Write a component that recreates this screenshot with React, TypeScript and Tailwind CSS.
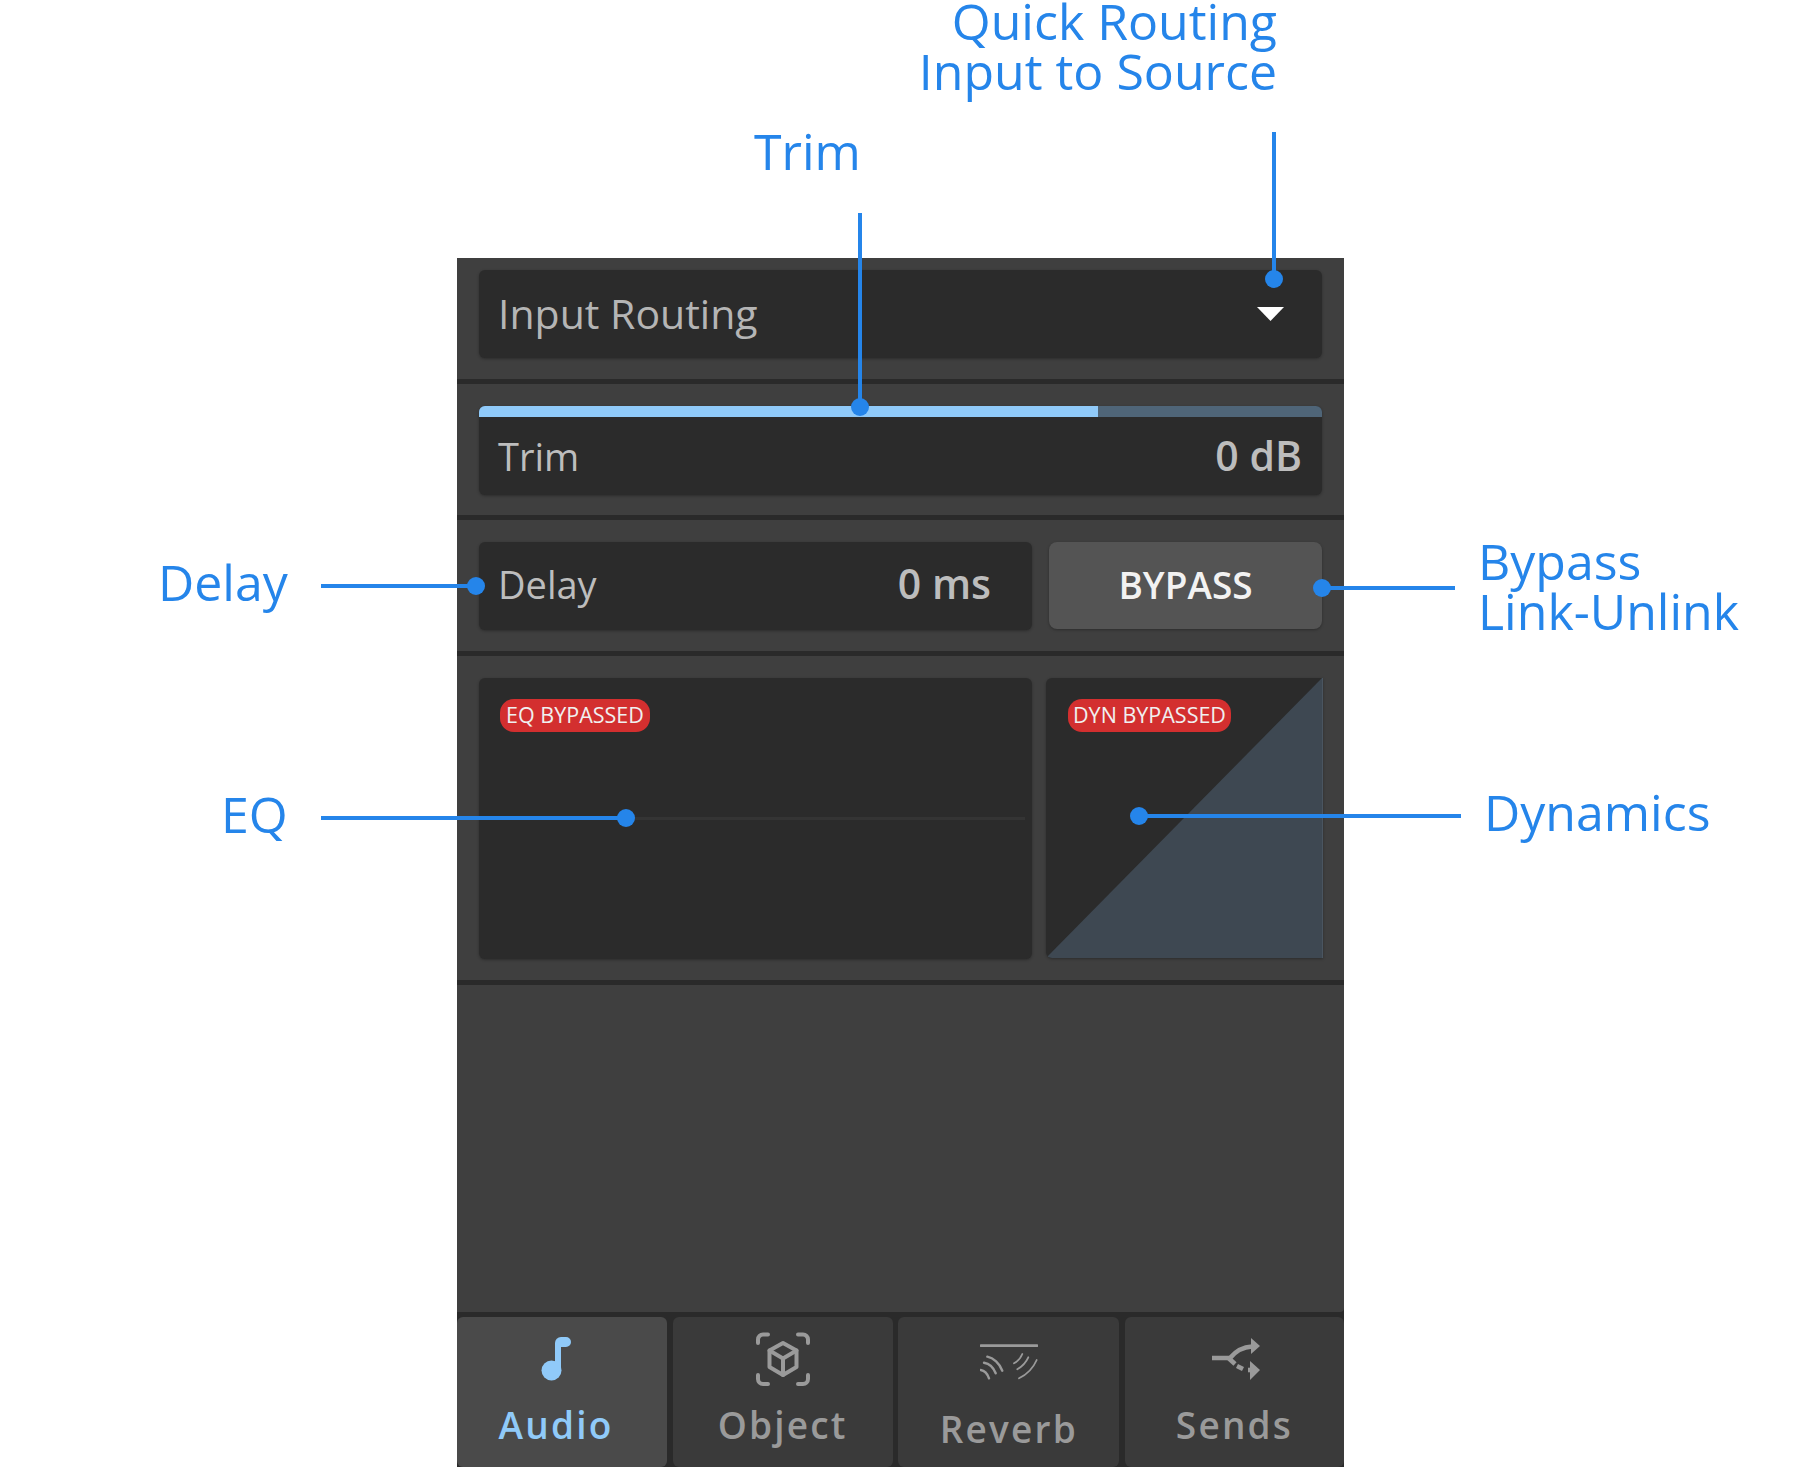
const font = { fontFamily: '"Open Sans", sans-serif' };

function Dot({ className }: { className: string }) {
  return <div className={`absolute h-[18px] w-[18px] rounded-full bg-[#2585ea] ${className}`} />;
}

function Label({ className, children }: { className: string; children: React.ReactNode }) {
  return <div className={`absolute whitespace-nowrap text-[50px] leading-[50px] text-[#2585ea] ${className}`}>{children}</div>;
}

function Line({ className }: { className: string }) {
  return <div className={`absolute bg-[#2585ea] ${className}`} />;
}

function Divider() {
  return <div className="h-[5px] bg-[#2a2a2a]" />;
}

function MusicIcon() {
  return (
    <svg width="30" height="44" viewBox="0 0 30 44" fill="#90caf9">
      <circle cx="10.5" cy="33.5" r="10" />
      <path d="M14 36V6a6 6 0 0 1 6-6h5a5 5 0 0 1 0 10h-5v26z" />
    </svg>
  );
}

function ObjectIcon() {
  return (
    <svg width="54" height="54" viewBox="0 0 54 54" fill="none" stroke="#9a9a9a" strokeWidth="4" strokeLinecap="round" strokeLinejoin="round">
      <path d="M12 2.5H7A5 5 0 0 0 2 7.5V11" />
      <path d="M42 2.5H47A5 5 0 0 1 52 7.5V11" />
      <path d="M2 43V47A5 5 0 0 0 7 52H12" />
      <path d="M52 43V47A5 5 0 0 1 47 52H42" />
      <path d="M27 11L40.5 18.5V35L27 43L13.5 35V18.5Z" />
      <path d="M13.5 18.5L27 26.5L40.5 18.5M27 26.5V43" />
    </svg>
  );
}

function ReverbIcon() {
  return (
    <svg width="58" height="36" viewBox="0 0 58 36" fill="none" stroke="#9a9a9a" strokeLinecap="round">
      <path d="M1 1.7H57" strokeWidth="2.8" />
      <g strokeWidth="2.4">
        <path d="M7.3 12.7C13.5 14 19.5 19.5 22.3 26.7" />
        <path d="M4 18.7C9 19.5 13.5 23.5 15.7 29.3" />
        <path d="M0.7 26C4 26.5 7.5 30 9 34.3" />
      </g>
      <g strokeWidth="1.8">
        <path d="M34 19.3C37.5 17.5 40.5 14.5 42.3 10" />
        <path d="M37.3 25.3C42 22.5 46 18.5 48.3 13.3" />
        <path d="M39 34.3C47 30.5 53 24.5 56.7 16" />
      </g>
    </svg>
  );
}

function SendsIcon() {
  return (
    <svg width="48" height="42" viewBox="0 0 48 42" fill="none" stroke="#9a9a9a" strokeWidth="4.6">
      <path d="M0 20H18C23 14 30 9 40 8.5" />
      <path d="M17 20.5L23 26" />
      <path d="M25 28L31 31" />
      <path d="M36 32H41" />
      <path d="M39 0L48 8L39 16Z" fill="#9a9a9a" stroke="none" />
      <path d="M38 23L48 32L38 42Z" fill="#9a9a9a" stroke="none" />
    </svg>
  );
}

function Tab({ width, bg, children, label, labelClass, iconClass }: { width: string; bg: string; children: React.ReactNode; label: string; labelClass: string; iconClass: string }) {
  return (
    <div className={`flex flex-col items-center rounded-md ${width} ${bg}`}>
      <div className={`flex items-start justify-center ${iconClass}`}>{children}</div>
      <div className={`text-[37px] font-semibold leading-[44px] tracking-[2.2px] ${labelClass}`}>{label}</div>
    </div>
  );
}

export default function App() {
  return (
    <div className="relative h-[1472px] w-[1801px] overflow-hidden bg-white" style={font}>
      <div className="ml-[457px] w-[887px] pt-[258px]">
        <div className="flex h-[1209px] flex-col rounded-b-sm bg-[#3f3f3f]">
          <div className="px-[22px] pb-[21px] pt-[12px]">
            <div className="flex h-[88px] items-center justify-between rounded-md bg-[#2b2b2b] pl-[19px] pr-[38px] shadow-[0_1px_3px_rgba(0,0,0,0.3)]">
              <span className="text-[41px] text-[#b5b5b5]">Input Routing</span>
              <svg width="27" height="14" viewBox="0 0 27 14"><path d="M0 0H27L13.5 14Z" fill="#ffffff" /></svg>
            </div>
          </div>
          <Divider />
          <div className="px-[22px] pb-[20px] pt-[22px]">
            <div className="flex h-[89px] flex-col overflow-hidden rounded-md bg-[#2b2b2b] shadow-[0_1px_3px_rgba(0,0,0,0.3)]">
              <div className="h-[11px] bg-[#4f6578]">
                <div className="h-full w-[619px] bg-[#90caf9]" />
              </div>
              <div className="flex flex-1 items-center justify-between pl-[19px] pr-[20px] text-[#bdbdbd]">
                <span className="text-[38px]">Trim</span>
                <span className="text-[41px] font-semibold">0 dB</span>
              </div>
            </div>
          </div>
          <Divider />
          <div className="flex gap-[17px] px-[22px] pb-[21px] pt-[22px]">
            <div className="flex h-[88px] w-[553px] items-center justify-between rounded-md bg-[#2b2b2b] pl-[19px] pr-[41px] text-[#bdbdbd] shadow-[0_1px_3px_rgba(0,0,0,0.3)]">
              <span className="mb-[4px] text-[38px]">Delay</span>
              <span className="mb-[4px] text-[41px] font-semibold">0 ms</span>
            </div>
            <div className="flex h-[87px] w-[273px] items-center justify-center rounded-lg bg-[#545454] pb-[2px] text-[37px] font-semibold text-[#f2f2f2] shadow-[0_1px_3px_rgba(0,0,0,0.3)]">
              BYPASS
            </div>
          </div>
          <Divider />
          <div className="flex gap-[14px] pl-[22px] pr-[21px] pb-[21px] pt-[22px]">
            <div className="relative flex h-[281px] w-[553px] flex-col rounded-md bg-[#2b2b2b] shadow-[0_1px_3px_rgba(0,0,0,0.3)]">
              <div className="ml-[21px] mt-[21px] flex h-[33px] w-[150px] items-center justify-center rounded-[14px] bg-[#d32f2f] text-[21.5px] text-[#f0f0f0]">EQ BYPASSED</div>
              <div className="ml-[147px] mt-[85px] h-[3px] w-[399px] bg-[#343434]" />
            </div>
            <div className="relative h-[280px] w-[277px] overflow-hidden rounded-l-md bg-[#2b2b2b] shadow-[0_1px_3px_rgba(0,0,0,0.3)]">
              <svg className="absolute inset-0" width="277" height="280" viewBox="0 0 277 280">
                <path d="M0 280L276 0H277V280Z" fill="#3e4852" />
                <path d="M276.5 0V280" stroke="#4a5560" strokeWidth="1" />
              </svg>
              <div className="absolute left-[22px] top-[21px] flex h-[33px] w-[163px] items-center justify-center whitespace-nowrap rounded-[14px] bg-[#d32f2f] text-[21.5px] text-[#f0f0f0]">DYN BYPASSED</div>
            </div>
          </div>
          <Divider />
          <div className="flex-1 bg-[#2a2a2a]">
            <div className="h-full rounded-br-[4px] bg-[#3f3f3f]" />
          </div>
          <Divider />
          <div className="flex h-[150px] justify-between bg-[#2a2a2a]">
            <Tab width="w-[210px] pr-[12px]" bg="bg-[#4a4a4a]" label="Audio" labelClass="text-[#90caf9]" iconClass="h-[86px] pt-[20px]"><MusicIcon /></Tab>
            <Tab width="w-[220px]" bg="bg-[#3a3a3a]" label="Object" labelClass="text-[#9a9a9a]" iconClass="h-[86px] pt-[15px]"><ObjectIcon /></Tab>
            <Tab width="w-[221px]" bg="bg-[#3a3a3a]" label="Reverb" labelClass="text-[#9a9a9a]" iconClass="h-[90px] pt-[27px]"><ReverbIcon /></Tab>
            <Tab width="w-[219px]" bg="bg-[#3a3a3a]" label="Sends" labelClass="text-[#9a9a9a]" iconClass="h-[86px] pt-[21px] pl-[3px]"><SendsIcon /></Tab>
          </div>
        </div>
      </div>

      <Label className="right-[524px] top-[-4px] text-right">Quick Routing<br />Input to Source</Label>
      <Label className="left-[754px] top-[126px]">Trim</Label>
      <Label className="left-[158px] top-[557px]">Delay</Label>
      <Label className="left-[221px] top-[789px]">EQ</Label>
      <Label className="left-[1478px] top-[536px]">Bypass<br />Link-Unlink</Label>
      <Label className="left-[1484px] top-[787px]">Dynamics</Label>

      <Line className="left-[1272px] top-[132px] h-[147px] w-[4px]" />
      <Dot className="left-[1265px] top-[270px]" />
      <Line className="left-[858px] top-[213px] h-[194px] w-[4px]" />
      <Dot className="left-[851px] top-[398px]" />
      <Line className="left-[321px] top-[584px] h-[4px] w-[155px]" />
      <Dot className="left-[467px] top-[577px]" />
      <Line className="left-[1322px] top-[586px] h-[4px] w-[133px]" />
      <Dot className="left-[1313px] top-[579px]" />
      <Line className="left-[321px] top-[816px] h-[4px] w-[305px]" />
      <Dot className="left-[617px] top-[809px]" />
      <Line className="left-[1139px] top-[814px] h-[4px] w-[322px]" />
      <Dot className="left-[1130px] top-[807px]" />
    </div>
  );
}
